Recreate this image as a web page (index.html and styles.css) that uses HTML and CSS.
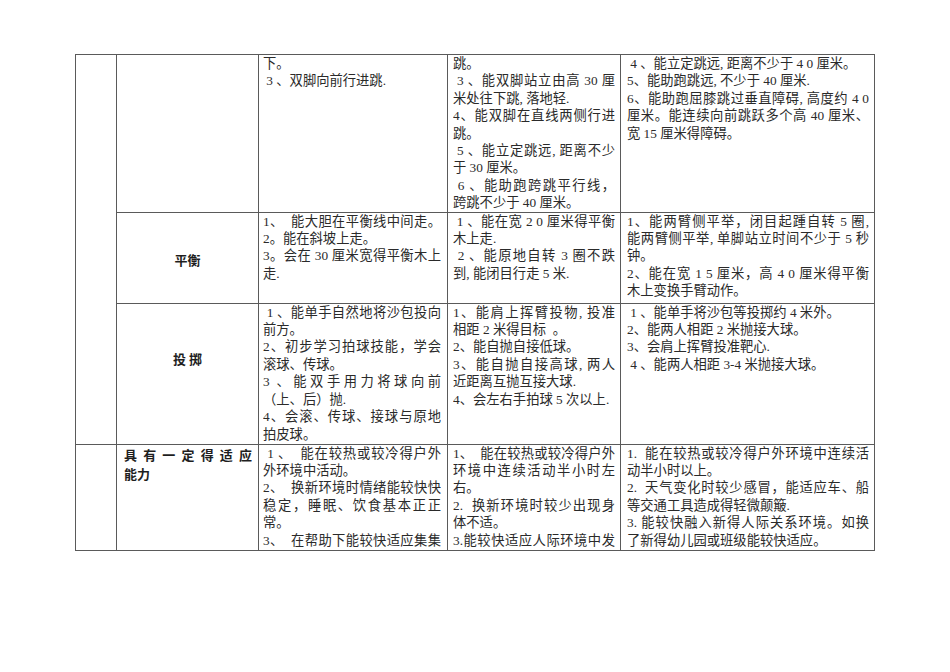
FILE: index.html
```html
<!DOCTYPE html>
<html lang="zh-CN">
<head>
<meta charset="utf-8">
<title>体能发展目标</title>
<link rel="stylesheet" href="styles.css">
</head>
<body>
<table class="grid">
  <colgroup>
    <col class="c1"><col class="c2"><col class="c3"><col class="c4"><col class="c5">
  </colgroup>
  <tr class="r1">
    <td class="blank" rowspan="3"></td>
    <td class="label"></td>
    <td class="txt p3">
      <div class="ln">下。</div>
      <div class="ln">&nbsp;3 、双脚向前行进跳.</div>
    </td>
    <td class="txt p4">
      <div class="ln">跳。</div>
      <div class="ln j">&nbsp;3 、能双脚站立由高 30 厘</div>
      <div class="ln">米处往下跳, 落地轻.</div>
      <div class="ln j">4、能双脚在直线两侧行进</div>
      <div class="ln">跳。</div>
      <div class="ln j">&nbsp;5 、能立定跳远, 距离不少</div>
      <div class="ln">于 30 厘米。</div>
      <div class="ln j">&nbsp;6 、能助跑跨跳平行线，</div>
      <div class="ln">跨跳不少于 40 厘米。</div>
    </td>
    <td class="txt p5">
      <div class="ln">&nbsp;4 、能立定跳远, 距离不少于 4 0 厘米。</div>
      <div class="ln">5、能助跑跳远, 不少于 40 厘米.</div>
      <div class="ln j">6、能助跑屈膝跳过垂直障碍, 高度约 4 0</div>
      <div class="ln j">厘米。能连续向前跳跃多个高 40 厘米、</div>
      <div class="ln">宽 15 厘米得障碍。</div>
    </td>
  </tr>
  <tr class="r2">
    <td class="label mid"><span class="tag">平衡</span></td>
    <td class="txt p3">
      <div class="ln j">1、&nbsp; 能大胆在平衡线中间走。</div>
      <div class="ln">2。能在斜坡上走。</div>
      <div class="ln j">3。会在 30 厘米宽得平衡木上</div>
      <div class="ln">走.</div>
    </td>
    <td class="txt p4">
      <div class="ln j">&nbsp;1 、能在宽 2 0 厘米得平衡</div>
      <div class="ln">木上走.</div>
      <div class="ln j">&nbsp;2 、能原地自转 3 圈不跌</div>
      <div class="ln">到, 能闭目行走 5 米.</div>
    </td>
    <td class="txt p5">
      <div class="ln j">1、能两臂侧平举，闭目起踵自转 5 圈,</div>
      <div class="ln j">能两臂侧平举, 单脚站立时间不少于 5 秒</div>
      <div class="ln">钟。</div>
      <div class="ln j">2、能在宽 1 5 厘米，高 4 0 厘米得平衡</div>
      <div class="ln">木上变换手臂动作。</div>
    </td>
  </tr>
  <tr class="r3">
    <td class="label throw"><span class="tag">投 掷</span></td>
    <td class="txt p3">
      <div class="ln j">&nbsp;1 、能单手自然地将沙包投向</div>
      <div class="ln">前方。</div>
      <div class="ln j">2、初步学习拍球技能，学会</div>
      <div class="ln">滚球、传球。</div>
      <div class="ln j">3 、能双手用力将球向前</div>
      <div class="ln">（上、后）抛.</div>
      <div class="ln j">4、会滚、传球、接球与原地</div>
      <div class="ln">拍皮球。</div>
    </td>
    <td class="txt p4">
      <div class="ln j">1、能肩上挥臂投物, 投准</div>
      <div class="ln">相距 2 米得目标&nbsp; 。</div>
      <div class="ln">2、能自抛自接低球。</div>
      <div class="ln j">3、能自抛自接高球, 两人</div>
      <div class="ln">近距离互抛互接大球.</div>
      <div class="ln">4、会左右手拍球 5 次以上.</div>
    </td>
    <td class="txt p5">
      <div class="ln">&nbsp;1 、能单手将沙包等投掷约 4 米外。</div>
      <div class="ln">2、能两人相距 2 米抛接大球。</div>
      <div class="ln">3、会肩上挥臂投准靶心.</div>
      <div class="ln">&nbsp;4 、能两人相距 3-4 米抛接大球。</div>
    </td>
  </tr>
  <tr class="r4">
    <td class="blank"></td>
    <td class="label adapt">
      <div class="tag j">具有一定得适应</div>
      <div class="tag">能力</div>
    </td>
    <td class="txt p3">
      <div class="ln j">&nbsp;1 、&nbsp; 能在较热或较冷得户外</div>
      <div class="ln">外环境中活动。</div>
      <div class="ln j">2、&nbsp; 换新环境时情绪能较快快</div>
      <div class="ln j">稳定，睡眠、饮食基本正正</div>
      <div class="ln">常。</div>
      <div class="ln j">3、&nbsp; 在帮助下能较快适应集集</div>
    </td>
    <td class="txt p4">
      <div class="ln j">1、&nbsp; 能在较热或较冷得户外</div>
      <div class="ln j">环境中连续活动半小时左</div>
      <div class="ln">右。</div>
      <div class="ln j">2.&nbsp; 换新环境时较少出现身</div>
      <div class="ln">体不适。</div>
      <div class="ln j">3.能较快适应人际环境中发</div>
    </td>
    <td class="txt p5">
      <div class="ln j">1.&nbsp; 能在较热或较冷得户外环境中连续活</div>
      <div class="ln">动半小时以上。</div>
      <div class="ln j">2.&nbsp; 天气变化时较少感冒，能适应车、船</div>
      <div class="ln">等交通工具造成得轻微颠簸.</div>
      <div class="ln j">3. 能较快融入新得人际关系环境。如换</div>
      <div class="ln">了新得幼儿园或班级能较快适应。</div>
    </td>
  </tr>
</table>
</body>
</html>
```

FILE: styles.css
```css
html, body {
  margin: 0;
  padding: 0;
  background: #ffffff;
}

body {
  font-family: "Liberation Serif", "Noto Sans CJK SC", serif;
  color: #2a2a2a;
}

.grid {
  border-collapse: collapse;
  table-layout: fixed;
  width: 800px;
  margin: 54px 0 0 75px;
}

.c1 { width: 41px; }
.c2 { width: 142px; }
.c3 { width: 189px; }
.c4 { width: 173px; }
.c5 { width: 254px; }

.grid td {
  border: 1px solid #5a5a5a;
  padding: 0;
  vertical-align: top;
}

.r1 { height: 157px; }
.r2 { height: 91px; }
.r3 { height: 141px; }
.r4 { height: 106px; }

.txt {
  font-size: 13.3px;
  line-height: 17.4px;
}

.p3 { padding: 0 6px 0 4px !important; }
.p4 { padding: 0 5px 0 5px !important; }
.p5 { padding: 0 5px 0 6px !important; }

.ln {
  white-space: nowrap;
  overflow: hidden;
}

.ln.j,
.tag.j {
  text-align: justify;
  text-align-last: justify;
  text-justify: inter-character;
}

.label {
  font-family: "Noto Sans CJK SC", sans-serif;
  font-weight: 700;
}

.label.mid {
  vertical-align: middle;
  text-align: center;
}

.label.throw {
  text-align: center;
  padding-top: 41px !important;
}

.tag {
  font-size: 13px;
  line-height: 19.5px;
  color: #1e1e1e;
}

.label.adapt {
  padding: 0 6px 0 7px !important;
}
```
